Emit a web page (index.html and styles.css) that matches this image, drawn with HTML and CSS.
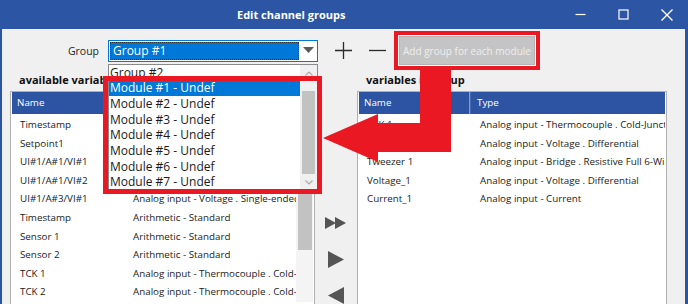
FILE: index.html
```html
<!DOCTYPE html>
<html>
<head>
    <title>Edit channel groups</title>
    <link rel="stylesheet" href="styles.css">
</head>
<body>
    <div class="window">
        <div class="titlebar">
            <span class="title">Edit channel groups</span>
            <div class="window-controls">
                <span class="window-control">
                    <svg width="11" height="11" viewBox="0 0 11 11"><line x1="0.5" y1="5.5" x2="10.5" y2="5.5" stroke="#fff" stroke-width="1.2"/></svg>
                </span>
                <span class="window-control">
                    <svg width="11" height="11" viewBox="0 0 11 11"><rect x="1" y="1" width="9" height="9" fill="none" stroke="#fff" stroke-width="1.2"/></svg>
                </span>
                <span class="window-control">
                    <svg width="12" height="12" viewBox="0 0 12 12"><path d="M0.5 0.5 L11.5 11.5 M11.5 0.5 L0.5 11.5" stroke="#fff" stroke-width="1.4"/></svg>
                </span>
            </div>
        </div>

        <div class="content">
            <div class="toolbar">
                <span class="group-label">Group</span>
                <div class="combo">
                    <div class="combo-value">Group #1</div>
                    <div class="combo-arrow">
                        <svg width="11" height="7" viewBox="0 0 11 7"><polygon points="0,0 11,0 5.5,6" fill="#5a5a5a"/></svg>
                    </div>

                    <!-- open dropdown list -->
                    <div class="dropdown">
                        <div class="dropdown-items" id="dropdownItems"></div>
                        <div class="dropdown-scroll">
                            <div class="scroll-btn">
                                <svg width="8" height="5" viewBox="0 0 8 5"><polyline points="0.5,4.5 4,1 7.5,4.5" fill="none" stroke="#a8a8a8" stroke-width="1.1"/></svg>
                            </div>
                            <div class="scroll-track"><div class="dropdown-thumb"></div></div>
                            <div class="scroll-btn">
                                <svg width="8" height="5" viewBox="0 0 8 5"><polyline points="0.5,0.5 4,4 7.5,0.5" fill="none" stroke="#a8a8a8" stroke-width="1.1"/></svg>
                            </div>
                        </div>
                        <div class="highlight-box"></div>
                    </div>
                </div>
                <span class="icon-button plus-button">
                    <svg width="17" height="17" viewBox="0 0 17 17"><path d="M8.5 0 V17 M0 8.5 H17" stroke="#2a2a2a" stroke-width="1.3"/></svg>
                </span>
                <span class="icon-button minus-button">
                    <svg width="17" height="17" viewBox="0 0 17 17"><path d="M0 8.5 H17" stroke="#2a2a2a" stroke-width="1.3"/></svg>
                </span>
                <button class="module-button">Add group for each module</button>
            </div>

            <div class="panels">
                <div class="panel">
                    <div class="panel-title">available variables</div>
                    <div class="table">
                        <div class="thead">
                            <div class="col-name">Name</div>
                            <div class="col-type">Type</div>
                        </div>
                        <div class="tbody">
                            <div class="rows" id="availableRows"></div>
                            <div class="vscroll">
                                <div class="vscroll-btn"></div>
                                <div class="vscroll-thumb"></div>
                            </div>
                        </div>
                    </div>
                </div>

                <div class="movers">
                    <svg width="22" height="12" viewBox="0 0 22 12"><polygon points="0,0 11,6 0,12" fill="#555"/><polygon points="10,0 21,6 10,12" fill="#555"/></svg>
                    <svg class="mover-single" width="16" height="17" viewBox="0 0 16 17"><polygon points="0,0 16,8.5 0,17" fill="#555"/></svg>
                    <svg class="mover-single" width="16" height="17" viewBox="0 0 16 17"><polygon points="16,0 0,8.5 16,17" fill="#555"/></svg>
                </div>

                <div class="panel">
                    <div class="panel-title">variables in group</div>
                    <div class="table">
                        <div class="thead">
                            <div class="col-name">Name</div>
                            <div class="col-type">Type</div>
                        </div>
                        <div class="tbody">
                            <div class="rows" id="groupRows"></div>
                        </div>
                    </div>
                </div>
            </div>
        </div>

        <!-- annotation arrow -->
        <svg class="annotation-arrow" width="688" height="304" viewBox="0 0 688 304">
            <path d="M420 68 H451 V152 H378 V162 L323 138 L378 114 V123 H420 Z" fill="#ea1822"/>
        </svg>
    </div>

    <script>
        const dropdownItems = ['Group #2', 'Module #1 - Undef', 'Module #2 - Undef', 'Module #3 - Undef',
            'Module #4 - Undef', 'Module #5 - Undef', 'Module #6 - Undef', 'Module #7 - Undef'];

        const availableVariables = [
            { name: 'Timestamp', type: 'System - Timestamp' },
            { name: 'Setpoint1', type: 'Setpoint - Standard' },
            { name: 'UI#1/A#1/VI#1', type: 'Analog input - Voltage . Single-ended' },
            { name: 'UI#1/A#1/VI#2', type: 'Analog input - Voltage . Single-ended' },
            { name: 'UI#1/A#3/VI#1', type: 'Analog input - Voltage . Single-ended' },
            { name: 'Timestamp', type: 'Arithmetic - Standard' },
            { name: 'Sensor 1', type: 'Arithmetic - Standard' },
            { name: 'Sensor 2', type: 'Arithmetic - Standard' },
            { name: 'TCK 1', type: 'Analog input - Thermocouple . Cold-Junction' },
            { name: 'TCK 2', type: 'Analog input - Thermocouple . Cold-Junction' }
        ];

        const groupVariables = [
            { name: 'TCK 1', type: 'Analog input - Thermocouple . Cold-Junction' },
            { name: 'Voltage_2', type: 'Analog input - Voltage . Differential' },
            { name: 'Tweezer 1', type: 'Analog input - Bridge . Resistive Full 6-Wire' },
            { name: 'Voltage_1', type: 'Analog input - Voltage . Differential' },
            { name: 'Current_1', type: 'Analog input - Current' }
        ];

        function renderDropdown() {
            const list = document.getElementById('dropdownItems');
            dropdownItems.forEach((text, index) => {
                const item = document.createElement('div');
                item.className = 'dropdown-item' + (index === 1 ? ' selected' : '');
                item.textContent = text;
                list.appendChild(item);
            });
        }

        function renderRows(containerId, variables) {
            const container = document.getElementById(containerId);
            variables.forEach(variable => {
                const row = document.createElement('div');
                row.className = 'row';
                row.innerHTML = `
                    <div class="cell-name">${variable.name}</div>
                    <div class="cell-type">${variable.type}</div>
                `;
                container.appendChild(row);
            });
        }

        renderDropdown();
        renderRows('availableRows', availableVariables);
        renderRows('groupRows', groupVariables);
    </script>
</body>
</html>
```

FILE: styles.css
```css
body {
    margin: 0;
    font-family: "Open Sans", "Liberation Sans", sans-serif;
    background-color: #ffffff;
}

.window {
    position: relative;
    width: 688px;
    height: 304px;
    overflow: hidden;
    background-color: #2c56a4;
    display: flex;
    flex-direction: column;
}

/* Title bar */
.titlebar {
    height: 29px;
    flex-shrink: 0;
    display: flex;
    align-items: center;
    color: white;
}

.title {
    margin-left: 237px;
    font-size: 11px;
    font-weight: 700;
}

.window-controls {
    margin-left: auto;
    display: flex;
    height: 100%;
}

.window-control {
    width: 43px;
    display: flex;
    align-items: center;
    justify-content: center;
}

/* Dialog body */
.content {
    flex: 1;
    margin: 0 3px 0 2px;
    background-color: #f0f0f0;
}

.toolbar {
    display: flex;
    align-items: center;
    height: 29px;
    padding-top: 7px;
}

.group-label {
    width: 97px;
    text-align: right;
    font-size: 10.5px;
    color: #1e1e1e;
}

.combo {
    position: relative;
    margin-left: 9px;
    width: 210px;
    height: 22px;
    box-sizing: border-box;
    border: 1px solid #0078d7;
    background-color: #fff;
    display: flex;
}

.combo-value {
    flex: 1;
    margin: 1px;
    padding-left: 2px;
    background-color: #0078d7;
    border: 1px dotted #3a3020;
    color: white;
    font-size: 12px;
    line-height: 16px;
}

.combo-arrow {
    width: 17px;
    display: flex;
    align-items: center;
    justify-content: center;
}

/* Open dropdown */
.dropdown {
    position: absolute;
    top: 23px;
    left: -1px;
    width: 210px;
    box-sizing: border-box;
    border: 1px solid #8a8a8a;
    background-color: #fff;
    display: flex;
    z-index: 5;
}

.dropdown-items {
    flex: 1;
}

.dropdown-item {
    height: 15.7px;
    line-height: 15.7px;
    padding-left: 1px;
    font-size: 12px;
    color: #1a1a1a;
    white-space: nowrap;
}

.dropdown-item.selected {
    background-color: #0078d7;
    color: white;
}

.dropdown-scroll {
    width: 17px;
    display: flex;
    flex-direction: column;
    background-color: #f0f0f0;
}

.scroll-btn {
    height: 17px;
    display: flex;
    align-items: center;
    justify-content: center;
}

.scroll-track {
    flex: 1;
}

.dropdown-thumb {
    margin: 9px 2px 0;
    height: 83px;
    background-color: #c2c2c2;
}

.highlight-box {
    position: absolute;
    left: -6px;
    top: 11px;
    width: 219px;
    height: 118px;
    box-sizing: border-box;
    border: 5px solid #ea1822;
}

.icon-button {
    width: 22px;
    display: flex;
    justify-content: center;
}

.plus-button {
    margin-left: 14px;
}

.minus-button {
    margin-left: 12px;
}

.module-button {
    margin-left: 11px;
    width: 136px;
    height: 29px;
    padding: 0;
    border: 1px solid #b4b4b4;
    background-color: #c4c4c4;
    color: #eeeeee;
    font-family: "Open Sans", sans-serif;
    font-size: 10px;
    box-shadow: 0 0 0 1px #ffffff, 0 0 0 5px #ea1822;
}

/* Variable lists */
.panels {
    display: grid;
    grid-template-columns: 305px 42px 310px;
    margin-left: 8px;
}

.panel-title {
    height: 26px;
    box-sizing: border-box;
    padding: 5px 0 0 9px;
    line-height: 20px;
    font-size: 11px;
    font-weight: 700;
    color: #111;
}

.table {
    height: 240px;
    border: 1px solid #b0b0b0;
    padding: 0 1px;
    background-color: #fff;
    overflow: hidden;
}

.thead {
    display: flex;
    height: 22px;
    line-height: 22px;
    background-color: #2c54a2;
    color: white;
    font-size: 9.8px;
}

.thead .col-name {
    width: 105px;
    padding-left: 5px;
    border-right: 1px solid #8799c6;
}

.thead .col-type {
    flex: 1;
    padding-left: 6px;
    border-left: 1px solid #4a6ab0;
}

.tbody {
    display: flex;
}

.rows {
    flex: 1;
    padding-top: 2px;
    overflow: hidden;
}

.row {
    display: flex;
    height: 18.6px;
    line-height: 18.6px;
    font-size: 9.8px;
    color: #1a1a1a;
    white-space: nowrap;
}

.cell-name {
    width: 103px;
    padding-left: 8px;
    flex-shrink: 0;
    overflow: hidden;
}

.cell-type {
    flex: 1;
    padding-left: 10px;
    overflow: hidden;
}

.vscroll {
    width: 17px;
    background-color: #f4f4f4;
}

.vscroll-btn {
    height: 18px;
}

.vscroll-thumb {
    margin: 0 1px 0 2px;
    height: 118px;
    background-color: #c2c2c2;
}

.movers {
    display: flex;
    flex-direction: column;
    align-items: center;
    padding-top: 152px;
}

.mover-single {
    margin-top: 22px;
}

.mover-single + .mover-single {
    margin-top: 19px;
}

/* Annotation overlay */
.annotation-arrow {
    position: absolute;
    left: 0;
    top: 0;
    z-index: 10;
    pointer-events: none;
}
```
